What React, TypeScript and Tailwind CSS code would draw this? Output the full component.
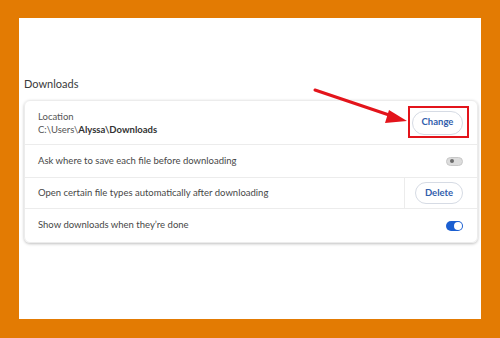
import React from 'react';

const Toggle = ({ on }: { on: boolean }) => (
	<div
		className={
			on
				? 'w-[17px] h-[10px] rounded-full bg-[#1b5fd1] flex items-center justify-end pr-[1px]'
				: 'w-[17px] h-[9px] rounded-full bg-[#dcdcdc] border border-[#c8c8c8] flex items-center pl-[3px]'
		}>
		<div className={on ? 'w-[8px] h-[8px] rounded-full bg-white' : 'w-[4px] h-[4px] rounded-full bg-[#6b6b6b]'} />
	</div>
);

const PillButton = ({ label, className }: { label: string; className: string }) => (
	<button
		className={`rounded-full border border-[#d6dbe4] bg-white text-[#3160ad] font-bold text-[9.5px] flex items-center justify-center ${className}`}>
		{label}
	</button>
);

export default function App() {
	return (
		<div className="w-[500px] h-[338px] bg-[#e37b03] pt-[18px] px-[19px] font-['Lato',sans-serif]">
			<div className="relative h-[301px] bg-white pt-[59px] pl-[5px] pr-[3px]">
				<h2 className="text-[11px] leading-[14px] text-[#3a3a3a] mb-[9px]">Downloads</h2>

				<div className="rounded-[6px] border border-[#ececec] shadow-[0_1px_3px_rgba(0,0,0,0.25)] text-[9.5px] text-[#474747]">
					<div className="h-[44px] flex items-center justify-between pl-[13px] pr-[14px] border-b border-[#ececec]">
						<div className="leading-[13px]">
							<p className="text-[#555]">Location</p>
							<p className="text-[#555]">
								C:\Users\<span className="font-bold text-[#333]">Alyssa\Downloads</span>
							</p>
						</div>
						<PillButton label="Change" className="w-[51px] h-[24px]" />
					</div>

					<div className="h-[33px] flex items-center justify-between pl-[13px] pr-[14px] border-b border-[#ececec]">
						<p>Ask where to save each file before downloading</p>
						<Toggle on={false} />
					</div>

					<div className="h-[31px] flex items-center justify-between pl-[13px] pr-[14px] border-b border-[#ececec]">
						<p>Open certain file types automatically after downloading</p>
						<div className="h-full flex items-center">
							<div className="h-full w-px bg-[#ececec] mr-[10px]" />
							<PillButton label="Delete" className="w-[48px] h-[22px]" />
						</div>
					</div>

					<div className="h-[33px] flex items-center justify-between pl-[13px] pr-[14px]">
						<p>Show downloads when they’re done</p>
						<Toggle on />
					</div>
				</div>

				{/* annotation: red box + arrow */}
				<div className="absolute left-[389px] top-[88px] w-[61px] h-[32px] border-2 border-[#e3141b]" />
				<svg className="absolute left-[290px] top-[66px]" width="104" height="46" viewBox="0 0 104 46">
					<line x1="6" y1="6" x2="86" y2="33" stroke="#e3141b" strokeWidth="3" strokeLinecap="round" />
					<polygon points="98,37 80,26 76,39" fill="#e3141b" />
				</svg>
			</div>
		</div>
	);
}
